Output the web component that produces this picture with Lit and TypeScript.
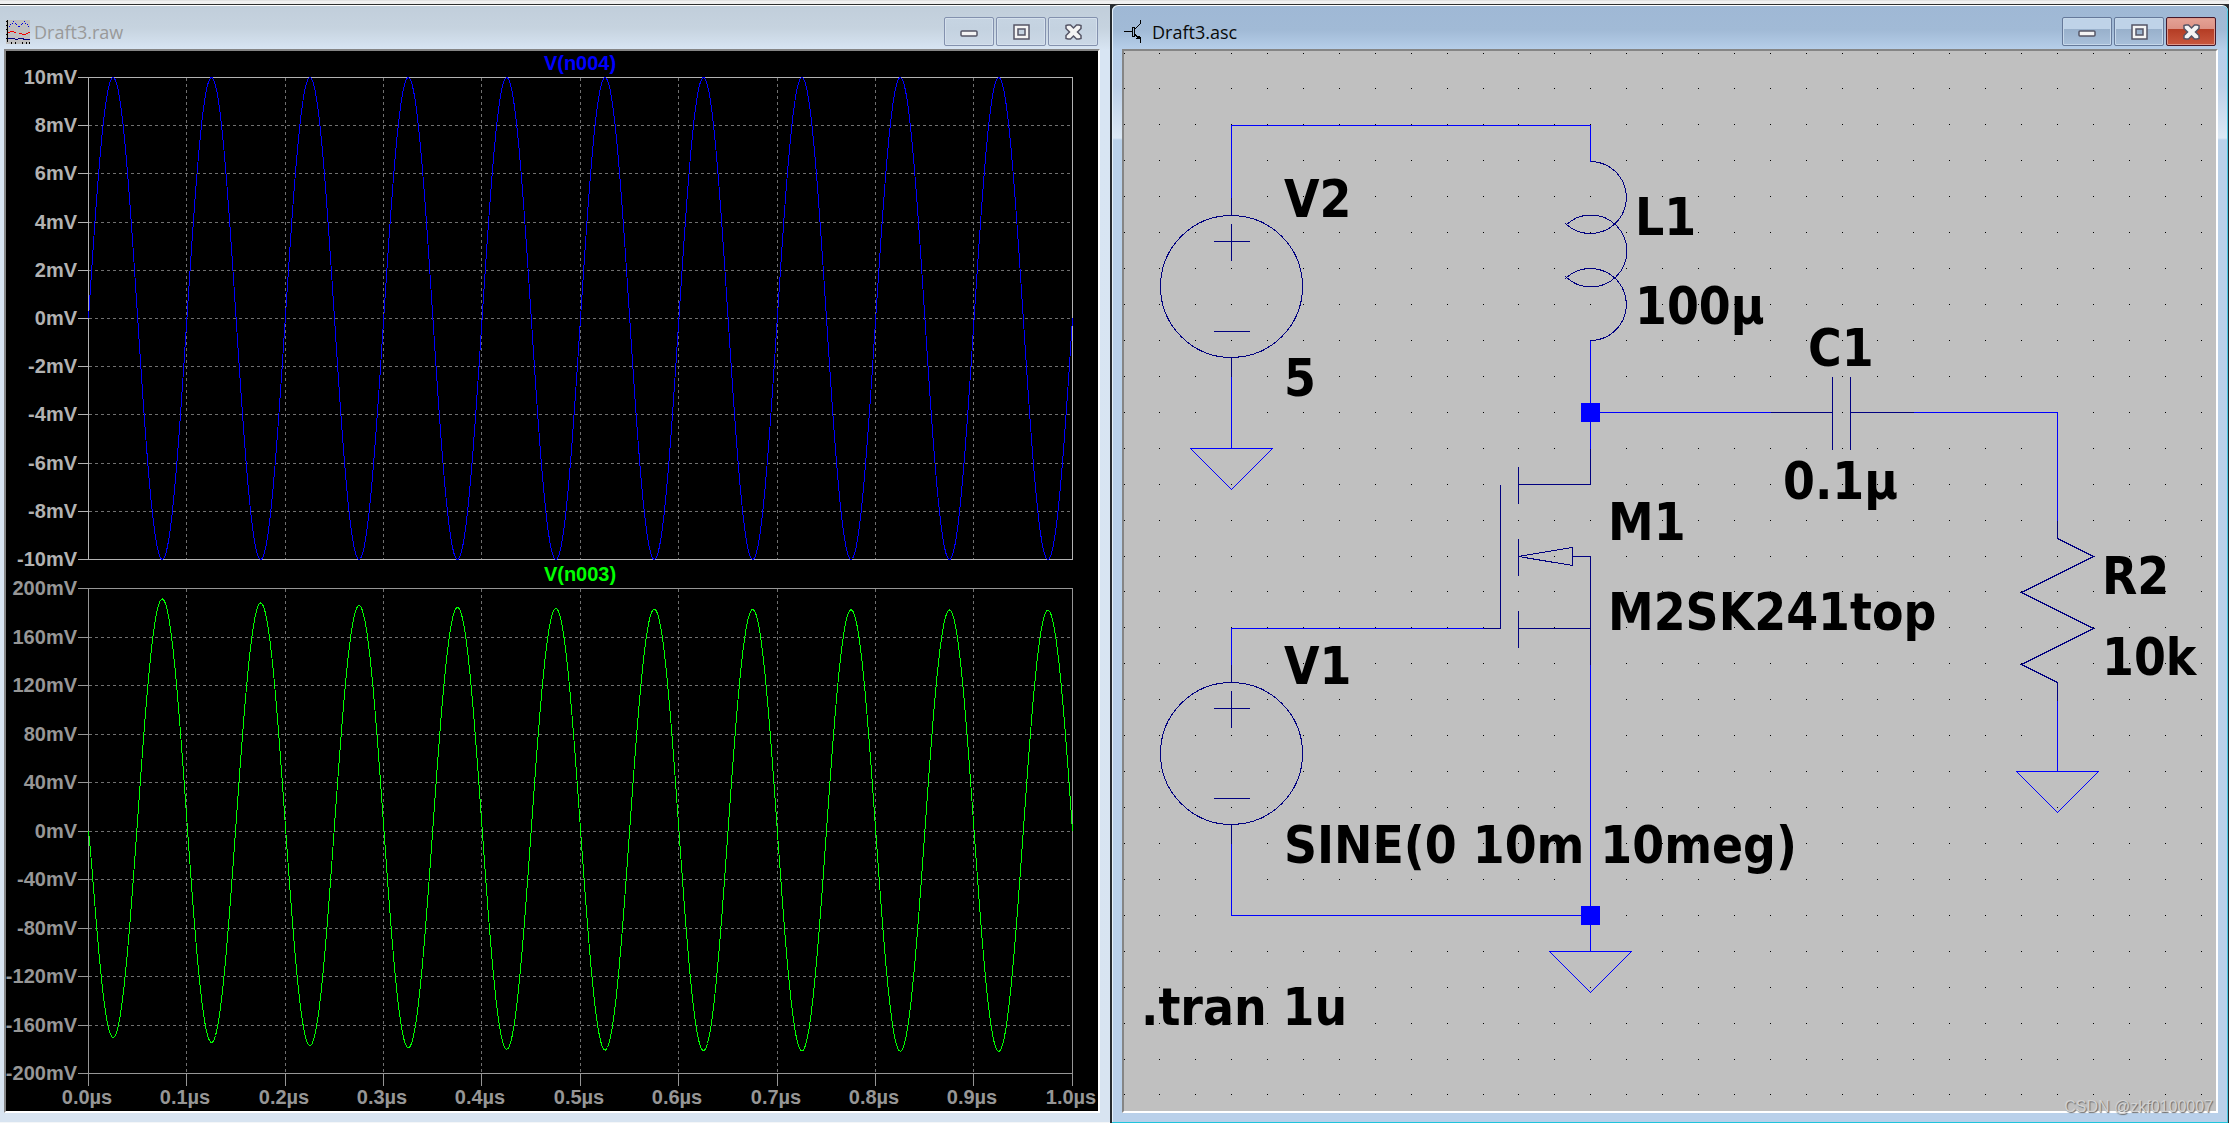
import { LitElement, html, css, svg } from "lit";
import { customElement, property } from "lit/decorators.js";
import { classMap } from "lit/directives/class-map.js";

/* ---------- icons ---------- */

const waveIcon = html`<svg class="icon" viewBox="0 0 24 24" width="24" height="24" shape-rendering="crispEdges" aria-hidden="true">
  <rect width="24" height="24" fill="#c0c0c0" />
  <path d="M1 0h1v22h-1zM0 1h1v1h-1zM0 5h1v1h-1zM0 9h1v1h-1zM0 14h1v1h-1zM0 18h1v1h-1zM5 22h1v2h-1zM9 22h1v2h-1zM16 22h1v2h-1zM20 22h1v2h-1zM23 22h1v2h-1z" fill="#000" />
  <path d="M3 6h1v1h-1zM4 4h1v1h-1zM6 3h1v1h-1zM7 1h1v1h-1zM9 3h1v1h-1zM10 4h1v1h-1zM12 6h2v1h-2zM15 4h1v1h-1zM16 3h1v1h-1zM18 1h1v1h-1zM19 3h1v1h-1zM21 4h1v1h-1zM22 6h1v1h-1z" fill="#0000e0" />
  <path d="M2 12h2v1h-2zM4 11h4v1h-4zM8 12h2v1h-2zM13 13h3v1h-3zM16 14h4v1h-4zM20 13h2v1h-2zM22 12h2v1h-2z" fill="#f00000" />
  <path d="M2 18h7v1h-7zM9 19h3v1h-3zM12 18h6v1h-6zM17 19h7v1h-7z" fill="#000080" />
</svg>`;

const transistorIcon = html`<svg class="icon" viewBox="0 0 24 24" width="24" height="24" shape-rendering="crispEdges" aria-hidden="true">
  <path d="M0 11h8v1h-8zM8 7h1v10h-1zM10 7h1v10h-1zM8 7h3v1h-3zM8 16h3v1h-3z" fill="#000" />
  <path d="M11 8h1v-1h1v-1h1v-1h1v-1h1v-4h1v4h-1v1h-1v1h-1v1h-1v1h-1v1h-1z" fill="#000" />
  <path d="M11 14h1v1h1v1h3v1h1v6h-1v-4h-4v-1h1v-1h-1v-1h-1z" fill="#000" />
</svg>`;

const glyphs = {
  minimize: svg`<rect x="1" y="8" width="16" height="5" rx="1" />`,
  maximize: svg`<path fill-rule="evenodd" d="M2 2h15v14h-15zM6 6v6h7v-6z" />`,
  close: svg`<path d="M2 2.500 4 2H6.500L9.500 5 12.500 2H15L17 2.500V5.500L13.500 9 17 12.500V15.500L15 16H12.500L9.500 13 6.500 16H4L2 15.500V12.500L5.500 9 2 5.500Z" />`,
};

/* ---------- MDI child window ---------- */

@customElement("child-window")
export class ChildWindow extends LitElement {
  @property() caption = "";
  @property({ type: Boolean }) active = false;
  @property({ attribute: false }) icon: unknown = null;

  static styles = css`
    :host { display: flex; min-width: 0; }
    .frame {
      flex: 1; min-width: 0; display: flex; flex-direction: column; box-sizing: border-box;
      padding: 0 10px 9px; border-top: 1px solid #fff; border-bottom: 1px solid #f4f6f8;
      background: linear-gradient(#c1cedb, #c6d3df 22px, #d8e5f3 44px, #d8e5f3 90px, #d8e4f1);
    }
    .frame.active {
      border-bottom-color: #20c4dc; border-radius: 6px 6px 0 0;
      background: linear-gradient(#9fb8d5, #a1bad6 24px, #b7cfea 44px, #bcd0e8 80px, #dbe8f5 132px, #b9d1ea 134px, #b9d0ea);
      box-shadow: inset 1px 0 #e6f2fb, inset -1px 0 #49c8e2;
    }
    .bar {
      display: flex; align-items: center; gap: 4px; box-sizing: border-box;
      height: 43px; padding: 8px 2px 0;
    }
    .icon { flex: none; }
    .caption {
      flex: 1; min-width: 0; white-space: nowrap; color: #999;
      font: 18px/24px "Open Sans", "Noto Sans", sans-serif;
    }
    .active .caption { color: #0a0a0a; }
    .buttons { display: flex; gap: 2px; }
    button {
      display: flex; align-items: center; justify-content: center;
      width: 50px; height: 29px; padding: 0; box-sizing: border-box;
      border: 1px solid #8391ae; border-radius: 2px;
      background: linear-gradient(#c6d4e2, #c4d2e0 40%, #cbd8e6); box-shadow: inset 0 0 0 1px #d5e0ec;
    }
    .active button {
      border-color: #65799a;
      background: linear-gradient(#bfd3e8 0 11px, #98b0cb 11px, #a9c0da); box-shadow: inset 0 0 0 1px #c6d8ea;
    }
    .active button.close {
      border-color: #45182a;
      background: linear-gradient(#e4a396, #dc9185 11px, #b43c24 11px, #c9583f); box-shadow: inset 0 0 0 1px #e0998b;
    }
    button svg { width: 19px; height: 18px; fill: #f4f4f4; stroke: #555566; stroke-width: 1.5; overflow: visible; }
    .client {
      flex: 1; min-height: 0; display: flex;
      border: 2px solid; border-color: #858585 #fff #fff #858585;
    }
    slot { display: flex; flex: 1; min-width: 0; }
    ::slotted(*) { flex: 1; min-width: 0; }
  `;

  render() {
    return html`<section class=${classMap({ frame: true, active: this.active })} aria-label=${this.caption}>
      <header class="bar">
        ${this.icon}
        <span class="caption">${this.caption}</span>
        <div class="buttons">
          ${(["minimize", "maximize", "close"] as const).map(
            (n) => html`<button class=${n} aria-label=${n}><svg viewBox="0 0 19 18">${glyphs[n]}</svg></button>`
          )}
        </div>
      </header>
      <div class="client"><slot></slot></div>
    </section>`;
  }
}

/* ---------- waveform viewer ---------- */

interface Pane {
  name: string;
  color: string;
  axis: string;
  top: number;
  bottom: number;
  max: number;
  step: number;
  titleY: number;
  value: (t: number) => number;
}

const LEFT = 88;
const RIGHT = 1072;
const PERIODS = 10;

const panes: Pane[] = [
  {
    name: "V(n004)", color: "#0000ff", axis: "#b2b2b2", top: 77, bottom: 559, max: 10, step: 2, titleY: 70,
    value: (t) => 10 * Math.sin(2 * Math.PI * t),
  },
  {
    name: "V(n003)", color: "#00ff00", axis: "#969696", top: 588, bottom: 1073, max: 200, step: 40, titleY: 581,
    value: (t) => -182 * Math.sin(2 * Math.PI * t) + 13 * Math.exp(-t / 2.3) * (1 - Math.exp(-t / 0.03)),
  },
];

const tickX = (i: number) => Math.floor(LEFT + ((RIGHT - LEFT) * i) / 10 + 0.2);

@customElement("waveform-plot")
export class WaveformPlot extends LitElement {
  static styles = css`
    :host { display: flex; background: #000; }
    svg { display: block; width: 100%; height: 100%; }
    text { font: bold 20px "Liberation Sans", Arial, sans-serif; }
    .value { text-anchor: end; }
    .time, .name { text-anchor: middle; }
    .line { fill: none; stroke-width: 1; shape-rendering: crispEdges; }
    .grid { stroke: #707070; stroke-dasharray: 3 3; }
  `;

  private pane(p: Pane) {
    const y = (v: number) => p.top + ((p.max - v) / (2 * p.max)) * (p.bottom - p.top);
    const rows = Array.from({ length: 11 }, (_, i) => p.max - i * p.step);
    const cols = Array.from({ length: 9 }, (_, i) => tickX(i + 1));
    const points: string[] = [];
    for (let x = LEFT; x <= RIGHT; x++) {
      const t = ((x - LEFT) / (RIGHT - LEFT)) * PERIODS;
      points.push(`${x},${y(p.value(t)).toFixed(1)}`);
    }
    const rowY = (v: number) => Math.round(y(v));
    return svg`
      <g transform="translate(.5 .5)">
        <path class="line grid" d=${rows.slice(1, -1).map((v) => `M${LEFT} ${rowY(v)}H${RIGHT}`).join("") +
          cols.map((x) => `M${x} ${p.top}V${p.bottom}`).join("")} />
        <path class="line" stroke=${p.axis} d=${`M${LEFT} ${p.top}H${RIGHT}V${p.bottom}H${LEFT}Z` +
          rows.map((v) => `M${LEFT - 11} ${rowY(v)}h11`).join("")} />
        <polyline class="line" stroke=${p.color} points=${points.join(" ")} />
      </g>
      ${rows.map((v) => svg`<text class="value" fill=${p.axis} x="77" y=${rowY(v) + 7}>${v}mV</text>`)}
      <text class="name" fill=${p.color} x="580" y=${p.titleY}>${p.name}</text>`;
  }

  render() {
    const ticks = Array.from({ length: 11 }, (_, i) => i);
    return html`<svg viewBox="6 51 1092 1060" role="img" aria-label="Waveforms">
      ${panes.map((p) => this.pane(p))}
      <path class="line" transform="translate(.5 .5)" stroke="#969696" d=${ticks.map((i) => `M${tickX(i)} 1073v12`).join("")} />
      ${ticks.map((i) => svg`<text class="time" fill="#969696" x=${tickX(i) - 1} y="1104">${(i / 10).toFixed(1)}µs</text>`)}
    </svg>`;
  }
}

/* ---------- schematic ---------- */

const labels: [number, number, string][] = [
  [1284, 217, "V2"],
  [1284, 396, "5"],
  [1635, 235, "L1"],
  [1635, 324, "100µ"],
  [1808, 366, "C1"],
  [1783, 499, "0.1µ"],
  [1608, 540, "M1"],
  [1608, 630, "M2SK241top"],
  [2102, 594, "R2"],
  [2102, 675, "10k"],
  [1284, 684, "V1"],
  [1284, 863, "SINE(0 10m 10meg)"],
  [1141, 1025, ".tran 1u"],
];

const ground = (x: number, y: number) => `M${x - 41} ${y}h82l-41 41z`;
const wires = [
  "M1231 197V125H1590V161", "M1231 376V448", ground(1231, 448),
  "M1590 340V448", "M1590 412H1770", "M1913 412H2057V520", "M2057 700V771", ground(2057, 771),
  "M1231 664V628H1483", "M1231 843V915H1590", "M1590 664V951", ground(1590, 951),
].join("");

const source = (cy: number) =>
  `M1231 ${cy - 89}v18M1231 ${cy + 71}v19M1160 ${cy}a71 71 0 1 1 142 0a71 71 0 1 1 -142 0` +
  `M1231 ${cy - 63}v37M1213 ${cy - 45}h36M1213 ${cy + 45}h36`;
const parts = [
  source(286), source(753),
  "M1590 161A36 36 0 1 1 1565 223", "M1565 225A36 36 0 1 1 1565 276", "M1565 278A36 36 0 1 1 1590 340",
  "M1590 448V484H1518M1518 466V503M1500 484V628H1483",
  "M1518 538V575M1518 556L1572 547V565ZM1572 556H1590V664M1518 610V647M1518 628H1590",
  "M1770 412H1832M1832 376V449M1850 376V449M1850 412H1913",
  "M2057 520V538L2093 556L2021 592L2093 628L2021 664L2057 682V700",
].join("");

const dots = Array.from({ length: 31 }, (_, i) => Math.floor(1124 + 35.9 * i))
  .flatMap((x) => Array.from({ length: 30 }, (_, j) => `M${x} ${Math.floor(53 + 35.93 * j)}h1v1h-1z`))
  .join("");

@customElement("circuit-schematic")
export class CircuitSchematic extends LitElement {
  static styles = css`
    :host { display: flex; background: #c0c0c0; }
    svg { display: block; width: 100%; height: 100%; }
    text { font: bold 51px "DejaVu Sans Condensed", Tahoma, "DejaVu Sans", sans-serif; fill: #000; }
    .line { fill: none; stroke-width: 1; shape-rendering: crispEdges; }
    .wire { stroke: #0000ff; }
    .part { stroke: #000080; }
    .node { fill: #0000ff; }
  `;

  render() {
    return html`<svg viewBox="1124 51 1092 1060" role="img" aria-label="Schematic">
      <path d=${dots} shape-rendering="crispEdges" />
      ${labels.map(([x, y, t]) => svg`<text x=${x} y=${y}>${t}</text>`)}
      <g transform="translate(.5 .5)">
        <path class="line part" d=${parts} />
        <path class="line wire" d=${wires} />
      </g>
      <rect class="node" x="1581" y="403" width="19" height="19" />
      <rect class="node" x="1581" y="906" width="19" height="19" />
    </svg>`;
  }
}

/* ---------- workspace ---------- */

@customElement("app-root")
export class AppRoot extends LitElement {
  static styles = css`
    :host { display: block; overflow: hidden; }
    .workspace {
      position: relative; display: grid; grid-template-columns: 1fr 1fr; column-gap: 2px; box-sizing: border-box;
      height: 100vh; margin-left: -6px; padding-right: 1px; border-top: 5px solid #303030;
      border-image: linear-gradient(#e2e2e2 1px, #f0f0f0 1px 4px, #303030 4px) 5 0 0 / 5px 0 0;
      background: #262b30;
    }
    .watermark {
      position: absolute; right: 16px; bottom: 6px;
      font: 16px/20px "Liberation Sans", Arial, sans-serif; color: #d2d2d2; text-shadow: 1px 1px 1px #6a6a6a;
    }
  `;

  render() {
    return html`<main class="workspace">
      <child-window caption="Draft3.raw" .icon=${waveIcon}><waveform-plot></waveform-plot></child-window>
      <child-window caption="Draft3.asc" active .icon=${transistorIcon}><circuit-schematic></circuit-schematic></child-window>
      <span class="watermark">CSDN @zkf0100007</span>
    </main>`;
  }
}
